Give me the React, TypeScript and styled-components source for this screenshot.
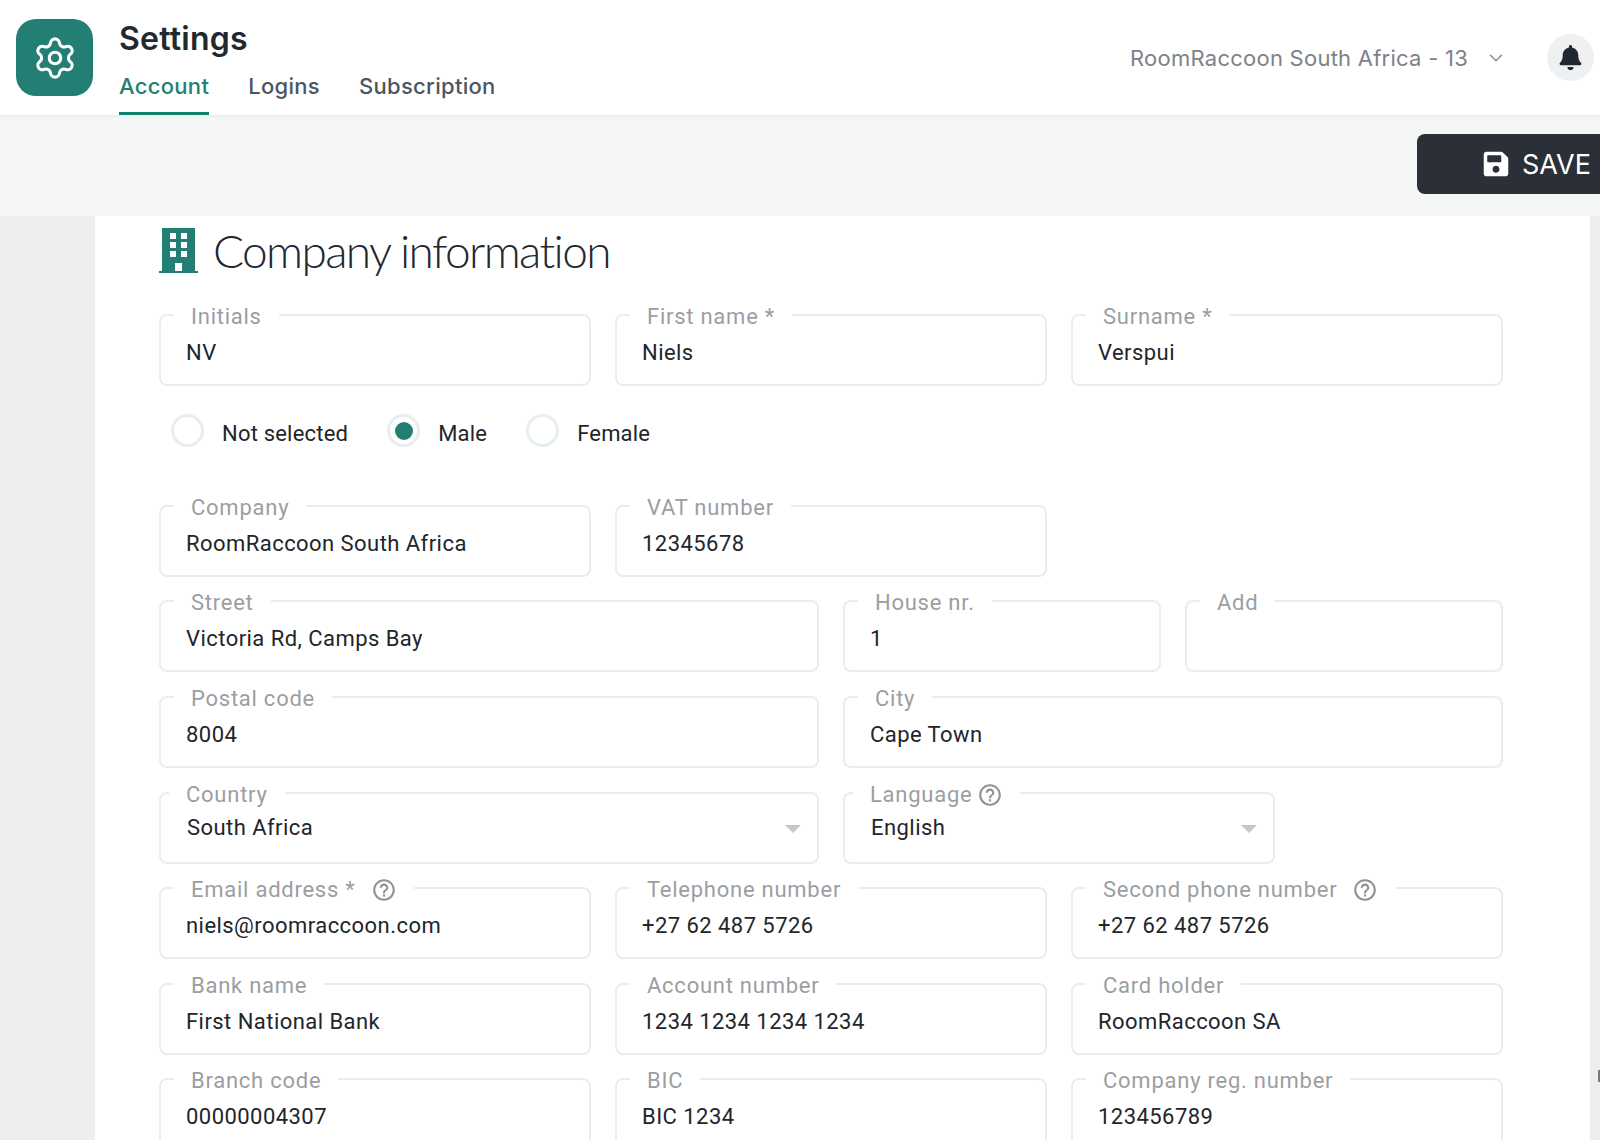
import React from 'react';
import styled, { createGlobalStyle } from 'styled-components';
import { Settings, ChevronDown } from 'lucide-react';
import { FaBell, FaSave } from 'react-icons/fa';
import { MdHelpOutline } from 'react-icons/md';

const Global = createGlobalStyle`
  html, body { margin: 0; padding: 0; background: #fff; }
  * { box-sizing: border-box; }
`;
const Page = styled.div`
  width: 1600px; height: 1140px; overflow: hidden; display: flex; flex-direction: column; position: relative;
  font-family: Roboto, "Liberation Sans", sans-serif; background: #eeeeee;
`;
const ScrollMark = styled.div`
  position: absolute; right: 0; top: 1070px; width: 2px; height: 12px; background: #77797b;
`;
const Header = styled.header`
  height: 117px; flex: none; background: #fff; border-bottom: 2px solid #eceeee;
  display: flex; padding-left: 16px;
`;
const AppIcon = styled.div`
  width: 77px; height: 77px; margin-top: 19px; border-radius: 20px; background: #237f73; color: #fff;
  display: flex; align-items: center; justify-content: center; flex: none;
`;
const TitleBlock = styled.div`
  margin-left: 26px; display: flex; flex-direction: column; flex: 1;
`;
const Title = styled.h1`
  margin: 18px 0 0; font: 600 32px/42px Inter, sans-serif; color: #22282f; letter-spacing: .25px;
`;
const Tabs = styled.nav`
  display: flex; gap: 39px; margin-top: 10px;
`;
const Tab = styled.div<{ $active?: boolean }>`
  font: 500 22px/32px Inter, sans-serif; height: 45px; letter-spacing: .3px;
  color: ${p => (p.$active ? '#1f8072' : '#4c5560')};
  border-bottom: ${p => (p.$active ? '3px solid #11806f' : '0')};
`;
const Tenant = styled.div`
  display: flex; align-items: center; color: #7d8287; font: 400 22px/30px Inter, sans-serif; letter-spacing: .25px;
  margin-top: 43px; height: 30px; gap: 17px;
`;
const Bell = styled.div`
  width: 47px; height: 47px; border-radius: 50%; background: #eef0f2; color: #22282f; margin: 34px 6px 0 40px;
  display: flex; align-items: center; justify-content: center; font-size: 25px;
`;
const Toolbar = styled.div`
  height: 99px; flex: none; background: #f4f6f6; display: flex; justify-content: flex-end; align-items: flex-start;
  overflow: hidden; padding-top: 17px;
`;
const SaveButton = styled.button`
  width: 200px; height: 60px; margin-right: -17px; flex: none; border: 0; border-radius: 8px; background: #2b3038; color: #fff;
  display: flex; align-items: center; gap: 12px; padding: 0 0 0 65px; font: 400 27px/1 Inter, sans-serif;
`;
const Card = styled.main`
  flex: 1; margin: 0 10px 0 95px; background: #fff; padding: 0 87px 0 64px; min-height: 0;
`;
const Heading = styled.h2`
  margin: 12px 0 26px; display: flex; align-items: center; gap: 15px; height: 46px;
  font: 300 46px/46px Lato, sans-serif; color: #22282f; letter-spacing: -1.65px;
`;
const Form = styled.div`
  display: flex; flex-direction: column; gap: 9.6px;
`;
const Row3 = styled.div`
  display: grid; grid-template-columns: repeat(3, 432px); gap: 24px;
`;
const Row2 = styled.div`
  display: grid; grid-template-columns: 660px 660px; gap: 24px;
`;
const Split = styled.div`
  display: grid; grid-template-columns: 318px 318px; gap: 24px;
`;
const Narrow = styled.div`
  width: 432px;
`;
const Box = styled.fieldset`
  margin: 0; min-width: 0; height: 86px; border: 2px solid #ececec; border-radius: 8px; padding: 0;
`;
const Legend = styled.legend<{ $select?: boolean; $gap?: number }>`
  margin-left: ${p => (p.$select ? 8 : 13)}px; padding: 4px 17px 0 17px; height: 30px; font: 400 22px/26px Roboto, sans-serif;
  color: #9b9ea2; letter-spacing: .75px; display: flex; align-items: center; gap: ${p => p.$gap ?? 8}px;
`;
const Value = styled.div<{ $flush?: boolean }>`
  font: 400 22px/30px Roboto, sans-serif; color: #22252a; letter-spacing: .45px; height: 30px; white-space: nowrap;
  margin: ${p => (p.$flush ? '0' : '8px 0 0 25px')};
`;
const SelectBody = styled.div`
  display: flex; align-items: center; justify-content: space-between; margin: 5px 16px 0 26px; height: 30px;
`;
const Caret = styled.span`
  width: 0; height: 0; border-left: 8px solid transparent; border-right: 8px solid transparent; border-top: 8px solid #c4c6c8; margin-top: 2px;
`;
const RadioRow = styled.div`
  height: 85.6px; padding: 0 0 15px 12px; display: flex; align-items: center;
`;
const RadioItem = styled.label`
  display: flex; align-items: center; gap: 18px; margin-right: 39px;
`;
const RadioText = styled.span`
  font: 400 22px/30px Roboto, sans-serif; color: #22252a; letter-spacing: .2px; margin-top: 6px;
`;
const RadioDot = styled.span<{ $on?: boolean }>`
  width: 33px; height: 33px; border-radius: 50%; border: 3px solid #e6efed; display: flex; align-items: center; justify-content: center; flex: none;
  &::after { content: ''; width: 18px; height: 18px; border-radius: 50%; background: ${p => (p.$on ? '#237f73' : 'transparent')}; }
`;
const Help = styled(MdHelpOutline)`
  font-size: 26px; color: #909396;
`;

const BuildingIcon = () => (
  <svg width="39" height="46" viewBox="0 0 39 46" fill="#237f73">
    <path fillRule="evenodd" d="M3 0h33v44H3zM11 5v6h6V5zM22 5v6h6V5zM11 14v6h6v-6zM22 14v6h6v-6zM11 23v6h6v-6zM22 23v6h6v-6zM16 35v9h7v-9z" />
    <rect x="0" y="43" width="39" height="2" />
  </svg>
);

type FieldProps = { label: string; value?: string; help?: boolean; gap?: number };
const Field = ({ label, value, help, gap }: FieldProps) => (
  <Box>
    <Legend $gap={gap}>{label}{help && <Help />}</Legend>
    <Value>{value}</Value>
  </Box>
);
const SelectField = ({ label, value, help, gap }: FieldProps) => (
  <Box>
    <Legend $select $gap={gap}>{label}{help && <Help />}</Legend>
    <SelectBody><Value $flush>{value}</Value><Caret /></SelectBody>
  </Box>
);
const Radio = ({ label, on }: { label: string; on?: boolean }) => (
  <RadioItem><RadioDot $on={on} /><RadioText>{label}</RadioText></RadioItem>
);

export default function App() {
  return (
    <Page>
      <Global />
      <Header>
        <AppIcon><Settings size={46} strokeWidth={1.6} /></AppIcon>
        <TitleBlock>
          <Title>Settings</Title>
          <Tabs>
            <Tab $active>Account</Tab>
            <Tab>Logins</Tab>
            <Tab>Subscription</Tab>
          </Tabs>
        </TitleBlock>
        <Tenant>RoomRaccoon South Africa - 13 <ChevronDown size={22} strokeWidth={1.4} /></Tenant>
        <Bell><FaBell /></Bell>
      </Header>
      <Toolbar>
        <SaveButton><FaSave size={28} />SAVE</SaveButton>
      </Toolbar>
      <Card>
        <Heading><BuildingIcon />Company information</Heading>
        <Form>
          <Row3>
            <Field label="Initials" value="NV" />
            <Field label="First name *" value="Niels" />
            <Field label="Surname *" value="Verspui" />
          </Row3>
          <RadioRow>
            <Radio label="Not selected" />
            <Radio label="Male" on />
            <Radio label="Female" />
          </RadioRow>
          <Row3>
            <Field label="Company" value="RoomRaccoon South Africa" />
            <Field label="VAT number" value="12345678" />
          </Row3>
          <Row2>
            <Field label="Street" value="Victoria Rd, Camps Bay" />
            <Split>
              <Field label="House nr." value="1" />
              <Field label="Add" />
            </Split>
          </Row2>
          <Row2>
            <Field label="Postal code" value="8004" />
            <Field label="City" value="Cape Town" />
          </Row2>
          <Row2>
            <SelectField label="Country" value="South Africa" />
            <Narrow><SelectField label="Language" value="English" help gap={5} /></Narrow>
          </Row2>
          <Row3>
            <Field label="Email address *" value="niels@roomraccoon.com" help gap={15} />
            <Field label="Telephone number" value="+27 62 487 5726" />
            <Field label="Second phone number" value="+27 62 487 5726" help gap={15} />
          </Row3>
          <Row3>
            <Field label="Bank name" value="First National Bank" />
            <Field label="Account number" value="1234 1234 1234 1234" />
            <Field label="Card holder" value="RoomRaccoon SA" />
          </Row3>
          <Row3>
            <Field label="Branch code" value="00000004307" />
            <Field label="BIC" value="BIC 1234" />
            <Field label="Company reg. number" value="123456789" />
          </Row3>
        </Form>
      </Card>
      <ScrollMark />
    </Page>
  );
}
